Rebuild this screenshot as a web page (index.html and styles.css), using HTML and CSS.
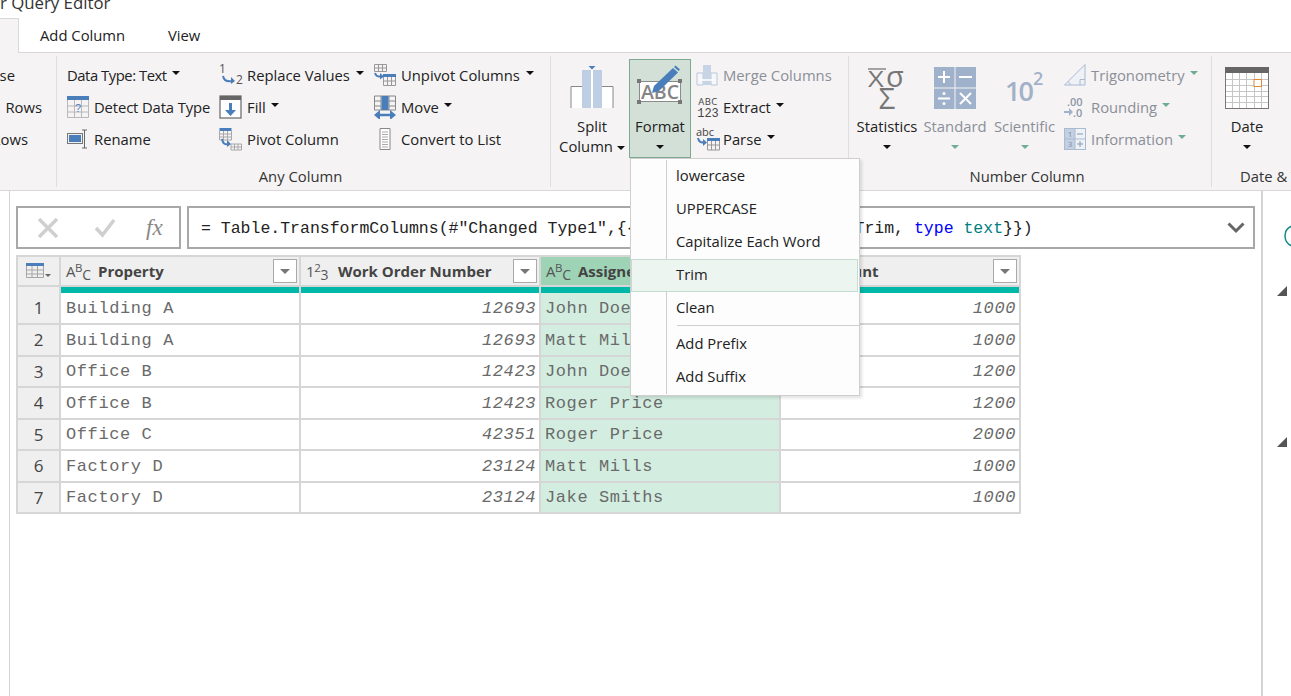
FILE: index.html
```html
<!DOCTYPE html>
<html lang="en">
<head>
<meta charset="utf-8">
<title>Power Query Editor</title>
<link rel="stylesheet" href="styles.css">
</head>
<body>
<div class="app">
  <div class="title">r Query Editor</div>
  <div class="tabs">
    <div class="tab-active"></div>
    <div class="tab tab-add">Add Column</div>
    <div class="tab tab-view">View</div>
    <div class="tab-rest"></div>
  </div>

  <div class="ribbon">
    <section class="group g0">
      <div class="clip-row r1">Transpose</div>
      <div class="clip-row r2">Reverse Rows</div>
      <div class="clip-row r3">Count Rows</div>
    </section>

    <section class="group g1">
      <div class="g-body">
        <div class="col c1">
          <div class="row"><span class="dt">Data Type: Text</span><i class="caret"></i></div>
          <div class="row">
            <svg class="ic" width="22" height="22" viewBox="0 0 22 22"><rect width="22" height="4" fill="#4a7ebb"/><path d="M.5 4v17.500h21V4M7.500 4v17.500M14.500 4v17.500M.5 10h21M.5 16h21" fill="none" stroke="#b9b9b9"/><text x="11" y="16" font-size="11" font-family="Liberation Sans" fill="#4a7ebb" text-anchor="middle">?</text></svg>
            <span class="detect">Detect Data Type</span></div>
          <div class="row">
            <svg class="ic" width="22" height="22" viewBox="0 0 22 22"><rect x=".5" y="5.500" width="15" height="10" fill="#eee" stroke="#777"/><rect x="2" y="7" width="12" height="7" fill="#4a7ebb"/><path d="M15 2h2.500v18H15M20 2h-2.500M20 20h-2.500" fill="none" stroke="#666"/></svg>
            <span>Rename</span></div>
        </div>
        <div class="col c2">
          <div class="row">
            <svg class="ic ic2" width="24" height="22" viewBox="0 0 24 22"><text x="0" y="9" font-size="12" font-family="Open Sans" fill="#555">1</text><text x="17" y="20" font-size="12" font-family="Open Sans" fill="#555">2</text><path d="M4 12c1 5 5 6 10 5" fill="none" stroke="#4a7ebb" stroke-width="2"/><path d="M12 13l4 4-4 3z" fill="#4a7ebb"/></svg>
            <span>Replace Values</span><i class="caret c-wide"></i></div>
          <div class="row">
            <svg class="ic ic2" width="24" height="24" viewBox="0 0 24 24"><rect x="1" y="1" width="21" height="22" fill="#fff" stroke="#666" stroke-width="1.200"/><rect x="1" y="1" width="21" height="4" fill="#666"/><path d="M10 8h3v7h4l-5.500 6L6 15h4z" fill="#4a7ebb"/></svg>
            <span>Fill</span><i class="caret"></i></div>
          <div class="row">
            <svg class="ic ic2" width="24" height="24" viewBox="0 0 24 24"><rect x=".5" y="1" width="12" height="3" fill="#4a7ebb"/><path d="M.5 4v9h12V4M4.500 4v9M8.500 4v9M.5 7h12M.5 10h12" fill="none" stroke="#a8a8a8"/><path d="M12 17h10.500v6H12zM15.500 17v6M19 17v6M12 20h10.500" fill="none" stroke="#a8a8a8"/><path d="M3 12c1 5 3 6 7 5" fill="none" stroke="#4a7ebb" stroke-width="2"/><path d="M8 13l4 4-4 3z" fill="#4a7ebb"/></svg>
            <span>Pivot Column</span></div>
        </div>
        <div class="col c3">
          <div class="row">
            <svg class="ic" width="22" height="22" viewBox="0 0 22 22"><path d="M.5 .5h12v7H.5zM4.500 .5v7M8.500 .5v7M.5 4h12" fill="none" stroke="#999"/><rect x="9" y="10" width="13" height="3" fill="#4a7ebb"/><path d="M9.500 13v8.500h12V13M13.500 13v8.500M17.500 13v8.500M9.500 17h12" fill="none" stroke="#999"/><path d="M1 9c1 3 3 4 6 3.500" fill="none" stroke="#4a7ebb" stroke-width="2"/><path d="M6 9l4 3.500-4 3z" fill="#4a7ebb"/></svg>
            <span>Unpivot Columns</span><i class="caret c-wide"></i></div>
          <div class="row">
            <svg class="ic" width="22" height="24" viewBox="0 0 22 24"><path d="M.5 1h21v14H.5zM7 1v14M15 1v14M.5 6h6.500M.5 11h6.500M15 6h6.500M15 11h6.500" fill="none" stroke="#888"/><rect x="7.500" y="1" width="7" height="14" fill="#4a7ebb"/><path d="M4 20h14" stroke="#4a7ebb" stroke-width="2.500"/><path d="M6 15v10l-6-5zM16 15v10l6-5z" fill="#4a7ebb"/></svg>
            <span>Move</span><i class="caret"></i></div>
          <div class="row">
            <svg class="ic" width="22" height="24" viewBox="0 0 22 24"><path d="M6 1.500h10v21H6z" fill="#fff" stroke="#888"/><path d="M8 5h6M8 7.500h6M8 10h6M8 12.500h6M8 15h6M8 17.500h6M8 20h6" stroke="#aaa"/></svg>
            <span>Convert to List</span></div>
        </div>
      </div>
      <div class="g-label lbl-l">Any Column</div>
    </section>

    <section class="group g2">
      <div class="g-body">
        <div class="lg w-split">
          <div class="lg-icon">
            <svg width="44" height="44" viewBox="0 0 44 44"><rect x="1" y="21" width="11" height="21" fill="#fff"/><rect x="32" y="21" width="11" height="21" fill="#fff"/><path d="M1 42V20.500h11M43 42V20.500H32" fill="none" stroke="#888"/><rect x="12" y="4" width="20" height="38" fill="#bfcfe3"/><rect x="21" y="4" width="2" height="38" fill="#fff"/><path d="M18.500 0h7L22 3.500z" fill="#4a7ebb"/></svg>
          </div>
          <div class="lg-text">Split</div>
          <div class="lg-text">Column<i class="caret c-near"></i></div>
        </div>
        <div class="lg lg-on w-format">
          <div class="lg-icon">
            <svg width="46" height="46" viewBox="0 0 46 46"><rect x="2.500" y="16.500" width="41" height="20" fill="#fff" stroke="#8b8b8b"/><g fill="#777"><rect x="0" y="14" width="4" height="4"/><rect x="41" y="14" width="4" height="4"/><rect x="0" y="35" width="4" height="4"/><rect x="41" y="35" width="4" height="4"/></g><text x="23" y="34" font-size="19.500" font-weight="600" font-family="Open Sans" fill="#858585" text-anchor="middle">ABC</text><path d="M15 28l2-7L36 3l5 4.500L22 26z" fill="#4a7ebb"/><path d="M37 2l1.500-1.500L43 4.500 41.500 6z" fill="#4a7ebb"/></svg>
          </div>
          <div class="lg-text">Format</div>
          <div class="lg-text"><i class="caret c-solo"></i></div>
        </div>
        <div class="col c-text">
          <div class="row off">
            <svg class="ic" width="22" height="22" viewBox="0 0 22 22"><path d="M1 9h6v12H1zM15 9h6v12h-6z" fill="#f6f7fa" stroke="#b8c7da"/><rect x="7" y="1" width="8" height="20" fill="#c7d4e5"/><path d="M4 16h14" stroke="#fff" stroke-width="1.500"/></svg>
            <span>Merge Columns</span></div>
          <div class="row">
            <svg class="ic ic-x" width="24" height="24" viewBox="0 0 24 24"><text x="12" y="10" font-size="9.500" font-family="Open Sans" fill="#444" text-anchor="middle" letter-spacing=".5">ABC</text><text x="12" y="22" font-size="12" font-family="Liberation Mono" fill="#444" text-anchor="middle">123</text></svg>
            <span>Extract</span><i class="caret"></i></div>
          <div class="row">
            <svg class="ic ic-x" width="24" height="24" viewBox="0 0 24 24"><text x="0" y="9" font-size="11" font-family="Open Sans" fill="#444">abc</text><rect x="11" y="11" width="13" height="3" fill="#4a7ebb"/><path d="M11.500 14v9h12v-9M15.500 14v9M19.500 14v9M11.500 18h12" fill="none" stroke="#999"/><path d="M2 11c1 4 3 5 6 4.500" fill="none" stroke="#4a7ebb" stroke-width="2"/><path d="M7 12l4 3.500-4 3.500z" fill="#4a7ebb"/></svg>
            <span>Parse</span><i class="caret"></i></div>
        </div>
      </div>
      <div class="g-label lbl-hidden">Text Column</div>
    </section>

    <section class="group g3">
      <div class="g-body">
        <div class="lg w-stat">
          <div class="lg-icon">
            <svg width="42" height="44" viewBox="0 0 42 44"><path d="M2 3h18" stroke="#888" stroke-width="1.500"/><text transform="translate(2 21) scale(1.300 1)" font-size="21" font-family="Open Sans" fill="#777">X</text><text x="20" y="21" font-size="29" font-family="Open Sans" fill="#777">σ</text><text x="21" y="43" font-size="29" font-family="Open Sans" fill="#777" text-anchor="middle">Σ</text></svg>
          </div>
          <div class="lg-text">Statistics</div>
          <div class="lg-text"><i class="caret c-solo"></i></div>
        </div>
        <div class="lg off w-std">
          <div class="lg-icon">
            <svg width="42" height="42" viewBox="0 0 42 42"><g fill="#a0b1cb"><rect width="20.500" height="20.500"/><rect x="21.500" width="20.500" height="20.500"/><rect y="21.500" width="20.500" height="20.500"/><rect x="21.500" y="21.500" width="20.500" height="20.500"/></g><path d="M10 4v12M4 10h12M25 10h13M4 31.500h12M26 26l11 11M37 26L26 37" stroke="#fff" stroke-width="2" fill="none"/><circle cx="10" cy="26.500" r="1.500" fill="#fff"/><circle cx="10" cy="36.500" r="1.500" fill="#fff"/></svg>
          </div>
          <div class="lg-text">Standard</div>
          <div class="lg-text"><i class="caret c-solo c-green"></i></div>
        </div>
        <div class="lg off w-sci">
          <div class="lg-icon">
            <svg width="42" height="40" viewBox="0 0 42 40"><text x="1" y="33" font-size="27" font-family="Open Sans" fill="#a3b1c8" font-weight="600" letter-spacing="-2">10</text><text x="29" y="17" font-size="18" font-family="Open Sans" fill="#a3b1c8" font-weight="600">2</text></svg>
          </div>
          <div class="lg-text">Scientific</div>
          <div class="lg-text"><i class="caret c-solo c-green"></i></div>
        </div>
        <div class="col c-num">
          <div class="row off">
            <svg class="ic ic-t" width="22" height="22" viewBox="0 0 22 22"><path d="M.5 21L21 .5V21z" fill="#eef1f6" stroke="#a9bad2"/><path d="M16 21v-5.500h5M6 21c0-2-1-3-2-3.500" fill="none" stroke="#a9bad2"/></svg>
            <span>Trigonometry</span><i class="caret c-green"></i></div>
          <div class="row off">
            <svg class="ic ic-t" width="22" height="22" viewBox="0 0 22 22"><text x="3" y="10" font-size="11" font-family="Open Sans" fill="#8d97a8" font-weight="600">.00</text><text x="9" y="21" font-size="11" font-family="Open Sans" fill="#8d97a8" font-weight="600">.0</text><path d="M0 16h6" stroke="#a0b1cb" stroke-width="2"/><path d="M5 12l4 4-4 4z" fill="#a0b1cb"/></svg>
            <span>Rounding</span><i class="caret c-green"></i></div>
          <div class="row off">
            <svg class="ic ic-t" width="22" height="22" viewBox="0 0 22 22"><rect x=".5" y=".5" width="21" height="21" fill="#eef1f6" stroke="#a9bad2"/><rect x="1" y="1" width="10" height="20" fill="#c3d0e2"/><path d="M11 1v20M1 11h20" stroke="#a9bad2"/><text x="6" y="9" font-size="8" font-family="Open Sans" fill="#7f8da5" text-anchor="middle">1</text><text x="6" y="19" font-size="8" font-family="Open Sans" fill="#7f8da5" text-anchor="middle">3</text><path d="M13 6h6M13 16h6M16 13v6" stroke="#8798b3"/></svg>
            <span>Information</span><i class="caret c-green"></i></div>
        </div>
      </div>
      <div class="g-label lbl-l">Number Column</div>
    </section>

    <section class="group g4">
      <div class="g-body">
        <div class="lg w-date">
          <div class="lg-icon">
            <svg width="44" height="42" viewBox="0 0 44 42"><rect x=".5" y=".5" width="43" height="41" fill="#fff" stroke="#777"/><rect width="44" height="6" fill="#666"/><path d="M7.500 6v35M14.500 6v35M21.500 6v35M29.500 6v35M36.500 6v35M1 12.500h42M1 18.500h42M1 24.500h42M1 29.500h42M1 35.500h42" stroke="#c6c6c6" fill="none"/><rect x="29" y="12.500" width="7.500" height="7" fill="#fff" stroke="#e08a3c"/></svg>
          </div>
          <div class="lg-text">Date</div>
          <div class="lg-text"><i class="caret c-solo"></i></div>
        </div>
        <div class="time-icon">
          <svg width="22" height="30" viewBox="0 0 22 30"><circle cx="16" cy="15" r="13" fill="none" stroke="#4a7ebb" stroke-width="2"/></svg>
        </div>
      </div>
      <div class="g-label lbl-date">Date &amp; Time</div>
    </section>
  </div>

  <div class="main">
    <div class="left-pane"></div>
    <div class="center">
      <div class="formula-row">
        <div class="fx-box">
          <svg class="fx-x" width="22" height="22" viewBox="0 0 22 22"><path d="M2 2l18 18M20 2L2 20" stroke="#cfcfcf" stroke-width="3.500"/></svg>
          <svg class="fx-ok" width="22" height="20" viewBox="0 0 22 20"><path d="M2 10l6.500 7L20 2" fill="none" stroke="#cfcfcf" stroke-width="3.500"/></svg>
          <span class="fx-f">fx</span>
        </div>
        <div class="formula">
          <span class="code">= Table.TransformColumns(#"Changed Type1",{{"Assigned Name", Text.Trim, <span class="kw">type</span> <span class="ty">text</span>}})</span>
          <svg class="chev" width="18" height="12" viewBox="0 0 18 12"><path d="M1.500 1.500L9 9l7.500-7.500" fill="none" stroke="#666" stroke-width="3"/></svg>
        </div>
      </div>

      <div class="table">
        <div class="th th-num"><svg width="28" height="18" viewBox="0 0 28 18"><rect x="1" y="1" width="18" height="3" fill="#4a7ebb"/><path d="M1.500 4v11.500h17V4M7 4v11.500M12.500 4v11.500M1.500 8h17M1.500 12h17" fill="none" stroke="#a5a5a5"/><path d="M20 12h6l-3 3z" fill="#666"/></svg></div>
        <div class="th"><span class="type">A<sup>B</sup><sub>C</sub></span><b>Property</b><span class="filter"></span></div>
        <div class="th"><span class="type">1<sup>2</sup><sub>3</sub></span><b>Work Order Number</b><span class="filter"></span></div>
        <div class="th th-sel"><span class="type">A<sup>B</sup><sub>C</sub></span><b>Assigned Name</b><span class="filter"></span></div>
        <div class="th"><span class="type">1<sup>2</sup><sub>3</sub></span><b>Amount</b><span class="filter"></span></div>

        <div class="rn first">1</div><div class="td first">Building A</div><div class="td first n">12693</div><div class="td first sel">John Doe</div><div class="td first n">1000</div>
        <div class="rn">2</div><div class="td">Building A</div><div class="td n">12693</div><div class="td sel">Matt Mills</div><div class="td n">1000</div>
        <div class="rn">3</div><div class="td">Office B</div><div class="td n">12423</div><div class="td sel">John Doe</div><div class="td n">1200</div>
        <div class="rn">4</div><div class="td">Office B</div><div class="td n">12423</div><div class="td sel">Roger Price</div><div class="td n">1200</div>
        <div class="rn">5</div><div class="td">Office C</div><div class="td n">42351</div><div class="td sel">Roger Price</div><div class="td n">2000</div>
        <div class="rn">6</div><div class="td">Factory D</div><div class="td n">23124</div><div class="td sel">Matt Mills</div><div class="td n">1000</div>
        <div class="rn">7</div><div class="td">Factory D</div><div class="td n">23124</div><div class="td sel">Jake Smiths</div><div class="td n">1000</div>
      </div>
    </div>
    <aside class="right-pane">
      <svg class="settings-ring" width="10" height="24" viewBox="0 0 10 24"><path d="M8 2C3 4 1 8 1 12s2 8 7 10" fill="none" stroke="#138a8a" stroke-width="1.500"/></svg>
      <i class="tri tri-1"></i>
      <i class="tri tri-2"></i>
    </aside>
  </div>

  <div class="menu">
    <div class="mi"><span class="gut"></span><span class="mt">lowercase</span></div>
    <div class="mi"><span class="gut"></span><span class="mt">UPPERCASE</span></div>
    <div class="mi"><span class="gut"></span><span class="mt">Capitalize Each Word</span></div>
    <div class="mi mi-on"><span class="gut"></span><span class="mt">Trim</span></div>
    <div class="mi"><span class="gut"></span><span class="mt">Clean</span></div>
    <div class="msep"><span class="gut"></span><span class="sep-line"></span></div>
    <div class="mi"><span class="gut"></span><span class="mt">Add Prefix</span></div>
    <div class="mi"><span class="gut"></span><span class="mt">Add Suffix</span></div>
  </div>
</div>
</body>
</html>
```
FILE: styles.css
```css
* { box-sizing: border-box; }
html, body { margin: 0; height: 100%; }
body { overflow: hidden; background: #fff; color: #222; font-family: "Open Sans", "Noto Sans", sans-serif; font-size: 14.800px; }
.app { position: relative; width: 1291px; height: 696px; overflow: hidden; display: flex; flex-direction: column; }

.title { height: 19px; overflow: hidden; line-height: 6px; font-size: 16.800px; color: #333; white-space: nowrap; flex: none; }

.tabs { height: 34px; display: flex; flex: none; }
.tab-active { width: 19px; background: #f5f3f4; border-top: 1px solid #d8d8d8; border-right: 1px solid #d8d8d8; margin-top: -1px; height: 35px; }
.tab { border-bottom: 1px solid #d8d8d8; line-height: 32px; color: #222; white-space: nowrap; }
.tab-add { padding-left: 21px; width: 149px; }
.tab-view { width: 70px; }
.tab-rest { flex: 1; border-bottom: 1px solid #d8d8d8; }

.ribbon { height: 138px; flex: none; display: flex; background: #f5f3f4; border-bottom: 1px solid #d8d8d8; padding-top: 3px; padding-bottom: 3px; }
.group { height: 131px; border-right: 1px solid #dedede; flex: none; white-space: nowrap; }
.g0 { width: 57px; overflow: hidden; padding-top: 3px; }
.g1 { width: 494px; }
.g2 { width: 298px; }
.g3 { width: 363px; }
.g4 { flex: 1; border-right: 0; overflow: hidden; }
.clip-row { height: 32px; line-height: 32px; display: flex; justify-content: flex-end; }
.r1 { padding-right: 41px; }
.r2 { padding-right: 14px; word-spacing: 8px; }
.r3 { padding-right: 28px; }

.g-body { height: 110px; display: flex; padding-top: 3px; }
.g1 .g-body { padding-left: 10px; }
.g2 .g-body { padding-left: 8px; }
.g3 .g-body { padding-left: 8px; }
.g4 .g-body { padding-left: 0; }
.g-label { height: 20px; line-height: 20px; text-align: center; color: #333; }
.lbl-l { padding-right: 6px; }
.lbl-hidden { visibility: hidden; }
.lbl-date { text-align: left; padding-left: 28px; }

.c1 { width: 152px; }
.c2 { width: 155px; }
.c3 { width: 170px; }
.c-text { margin-left: 5px; }
.c-num { margin-left: 8px; }
.row { height: 32px; display: flex; align-items: center; }
.dt { letter-spacing: -.450px; }
.detect { letter-spacing: -.120px; }
.ic { flex: none; margin-right: 5px; }
.ic2 { margin-right: 4px; }
.ic-x { margin-right: 3px; }
.ic-t { margin-right: 5px; }

.off { color: #8a8f98; }
.caret { display: inline-block; width: 0; height: 0; border-left: 4px solid transparent; border-right: 4px solid transparent; border-top: 4px solid #111; margin-left: 5px; position: relative; top: -2px; }
.c-wide { margin-left: 6px; }
.c-near { margin-left: 4px; }
.c-solo { margin-left: 0; top: -3px; }
.c-green { border-top-color: #6fae94; }

.lg { height: 99px; border: 1px solid transparent; display: flex; flex-direction: column; align-items: center; flex: none; line-height: 20px; }
.lg-icon { height: 56px; padding-bottom: 1px; display: flex; align-items: center; justify-content: center; flex: none; }
.lg-text { height: 20px; line-height: 20px; text-align: center; }
.lg-on { background: #d3e0d8; border-color: #7da892; }
.w-split { width: 66px; margin-right: 4px; }
.w-format { width: 62px; }
.w-stat { width: 60px; margin-right: 7px; }
.w-std { width: 62px; margin-right: 7px; }
.w-sci { width: 63px; }
.w-date { width: 70px; }
.time-icon { padding-top: 18px; margin-left: 7px; }

.main { flex: 1; display: flex; min-height: 0; }
.left-pane { width: 10px; border-right: 1px solid #d4d4d4; flex: none; }
.center { width: 1251px; padding: 15px 0 0 6px; flex: none; }
.right-pane { flex: 1; border-left: 2px solid #d4d4d4; padding-left: 21px; display: flex; flex-direction: column; align-items: flex-start; }

.formula-row { display: flex; height: 43px; gap: 6px; width: 1239px; }
.fx-box { width: 165px; border: 2px solid #a8a8a8; display: flex; align-items: center; padding-left: 19px; }
.fx-x { margin-right: 35px; }
.fx-ok { margin-right: 30px; }
.fx-f { font-family: "Liberation Serif", serif; font-style: italic; font-size: 23px; color: #888; line-height: 1; }
.formula { flex: 1; border: 2px solid #a8a8a8; display: flex; align-items: center; justify-content: space-between; padding: 0 8px 0 12px; }
.code { font-family: "Liberation Mono", monospace; font-size: 16.500px; color: #222; white-space: nowrap; padding-top: 1px; }
.kw { color: #0000ff; }
.ty { color: #008080; }

.table { margin-top: 6px; width: 1005px; height: 259px; display: grid; grid-template-columns: 41px 238px 238px 238px 238px; grid-template-rows: 28px 36px repeat(6, 29.500px); gap: 2px; padding: 2px; background: #d6d6d6; }
.th { background: #efefef; display: flex; align-items: center; padding-left: 5px; color: #444; font-size: 15px; white-space: nowrap; overflow: hidden; }
.th b { font-weight: 700; flex: 1; }
.th-num { padding-left: 7px; }
.th-sel { background: #9fd3b6; }
.type { font-size: 15px; color: #555; width: 32px; flex: none; line-height: 1; letter-spacing: -.400px; }
.type sup { font-size: 11.500px; vertical-align: 5px; line-height: 0; }
.type sub { font-size: 14px; vertical-align: -3px; line-height: 0; }
.filter { width: 24px; height: 24px; background: #fff; border: 1px solid #aaa; flex: none; margin-right: 2px; display: flex; align-items: center; justify-content: center; }
.filter::after { content: ""; border-left: 5px solid transparent; border-right: 5px solid transparent; border-top: 5px solid #777; }
.rn { background: #efefef; display: flex; align-items: center; justify-content: center; font-size: 17px; color: #444; }
.td { background: #fff; font-family: "Liberation Mono", monospace; font-size: 17px; letter-spacing: .600px; color: #6a6a6a; padding: .500px 0 0 5px; display: flex; align-items: center; white-space: nowrap; }
.td.n { justify-content: flex-end; padding: .500px 3px 0 0; font-style: italic; }
.td.sel { background: #d3eee0; padding-left: 4px; }
.td.first { border-top: 6px solid #00b7a8; }
.rn.first { border-top: 5px solid #efefef; }

.settings-ring { margin-top: 33px; margin-bottom: 38px; flex: none; }
.tri { display: block; width: 0; height: 0; border-left: 10px solid transparent; border-bottom: 10px solid #555; flex: none; margin-left: -7px; }
.tri-2 { margin-top: 141px; }

.menu { position: absolute; left: 630px; top: 158px; width: 230px; height: 238px; background: #fdfdfd; border: 1px solid #cfcfcf; box-shadow: 2px 2px 3px rgba(0,0,0,.12); padding-top: 1px; color: #222; }
.mi { height: 33px; display: flex; align-items: stretch; line-height: 31px; white-space: nowrap; }
.gut { width: 36px; border-right: 1px solid #cdcdcd; flex: none; display: block; }
.mt { padding-left: 9px; }
.mi-on { background: #edf5f0; outline: 1px solid #c5dbcf; outline-offset: -1px; margin-right: 1px; }
.mi-on .gut { border-right-color: transparent; }
.msep { height: 3px; display: flex; }
.sep-line { flex: 1; margin-left: 10px; height: 1px; background: #cdcdcd; }
```
